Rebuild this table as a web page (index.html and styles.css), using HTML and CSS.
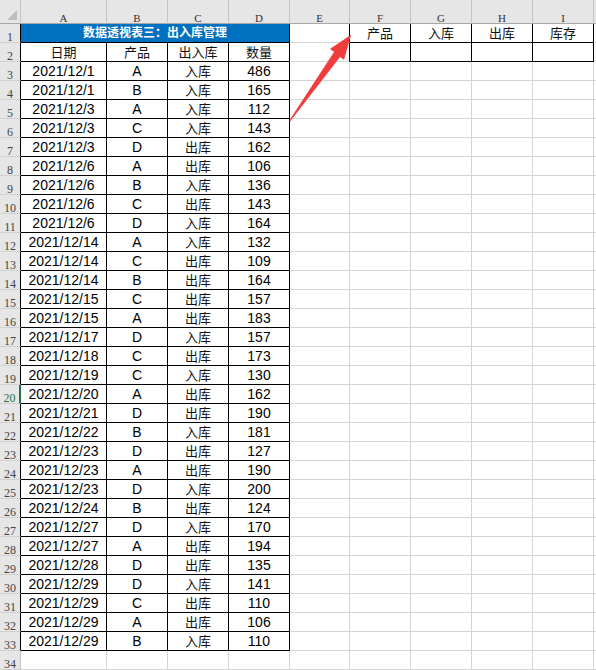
FILE: index.html
```html
<!DOCTYPE html>
<html lang="zh">
<head>
<meta charset="utf-8">
<title>数据透视表三：出入库管理</title>
<link rel="stylesheet" href="styles.css">
</head>
<body>
<div class="wrap">
<table class="sheet">
<colgroup>
<col class="w-h"><col class="w-a"><col class="w-n"><col class="w-n"><col class="w-n"><col class="w-e"><col class="w-n"><col class="w-n"><col class="w-n"><col class="w-n"><col class="w-j">
</colgroup>
<tr class="head"><th class="corner"><span class="tri"></span></th><th>A</th><th>B</th><th>C</th><th>D</th><th>E</th><th>F</th><th>G</th><th>H</th><th>I</th><th></th></tr>
<tr class="r1"><th>1</th><td class="title" colspan="4">数据透视表三：出入库管理</td><td class="edge"></td><td class="bx zh">产品</td><td class="bx zh">入库</td><td class="bx zh">出库</td><td class="bx zh">库存</td><td></td></tr>
<tr class="d r2"><th>2</th><td>日期</td><td>产品</td><td>出入库</td><td>数量</td><td class="edge"></td><td class="bx"></td><td class="bx"></td><td class="bx"></td><td class="bx"></td><td></td></tr>
<tr class="d"><th>3</th><td>2021/12/1</td><td>A</td><td>入库</td><td>486</td><td></td><td></td><td></td><td></td><td></td><td></td></tr>
<tr class="d"><th>4</th><td>2021/12/1</td><td>B</td><td>入库</td><td>165</td><td></td><td></td><td></td><td></td><td></td><td></td></tr>
<tr class="d"><th>5</th><td>2021/12/3</td><td>A</td><td>入库</td><td>112</td><td></td><td></td><td></td><td></td><td></td><td></td></tr>
<tr class="d"><th>6</th><td>2021/12/3</td><td>C</td><td>入库</td><td>143</td><td></td><td></td><td></td><td></td><td></td><td></td></tr>
<tr class="d"><th>7</th><td>2021/12/3</td><td>D</td><td>出库</td><td>162</td><td></td><td></td><td></td><td></td><td></td><td></td></tr>
<tr class="d"><th>8</th><td>2021/12/6</td><td>A</td><td>出库</td><td>106</td><td></td><td></td><td></td><td></td><td></td><td></td></tr>
<tr class="d"><th>9</th><td>2021/12/6</td><td>B</td><td>入库</td><td>136</td><td></td><td></td><td></td><td></td><td></td><td></td></tr>
<tr class="d"><th>10</th><td>2021/12/6</td><td>C</td><td>出库</td><td>143</td><td></td><td></td><td></td><td></td><td></td><td></td></tr>
<tr class="d"><th>11</th><td>2021/12/6</td><td>D</td><td>入库</td><td>164</td><td></td><td></td><td></td><td></td><td></td><td></td></tr>
<tr class="d"><th>12</th><td>2021/12/14</td><td>A</td><td>入库</td><td>132</td><td></td><td></td><td></td><td></td><td></td><td></td></tr>
<tr class="d"><th>13</th><td>2021/12/14</td><td>C</td><td>出库</td><td>109</td><td></td><td></td><td></td><td></td><td></td><td></td></tr>
<tr class="d"><th>14</th><td>2021/12/14</td><td>B</td><td>出库</td><td>164</td><td></td><td></td><td></td><td></td><td></td><td></td></tr>
<tr class="d"><th>15</th><td>2021/12/15</td><td>C</td><td>出库</td><td>157</td><td></td><td></td><td></td><td></td><td></td><td></td></tr>
<tr class="d"><th>16</th><td>2021/12/15</td><td>A</td><td>出库</td><td>183</td><td></td><td></td><td></td><td></td><td></td><td></td></tr>
<tr class="d"><th>17</th><td>2021/12/17</td><td>D</td><td>入库</td><td>157</td><td></td><td></td><td></td><td></td><td></td><td></td></tr>
<tr class="d"><th>18</th><td>2021/12/18</td><td>C</td><td>出库</td><td>173</td><td></td><td></td><td></td><td></td><td></td><td></td></tr>
<tr class="d"><th>19</th><td>2021/12/19</td><td>C</td><td>入库</td><td>130</td><td></td><td></td><td></td><td></td><td></td><td></td></tr>
<tr class="d act"><th>20</th><td>2021/12/20</td><td>A</td><td>出库</td><td>162</td><td></td><td></td><td></td><td></td><td></td><td></td></tr>
<tr class="d"><th>21</th><td>2021/12/21</td><td>D</td><td>出库</td><td>190</td><td></td><td></td><td></td><td></td><td></td><td></td></tr>
<tr class="d"><th>22</th><td>2021/12/22</td><td>B</td><td>入库</td><td>181</td><td></td><td></td><td></td><td></td><td></td><td></td></tr>
<tr class="d"><th>23</th><td>2021/12/23</td><td>D</td><td>出库</td><td>127</td><td></td><td></td><td></td><td></td><td></td><td></td></tr>
<tr class="d"><th>24</th><td>2021/12/23</td><td>A</td><td>出库</td><td>190</td><td></td><td></td><td></td><td></td><td></td><td></td></tr>
<tr class="d"><th>25</th><td>2021/12/23</td><td>D</td><td>入库</td><td>200</td><td></td><td></td><td></td><td></td><td></td><td></td></tr>
<tr class="d"><th>26</th><td>2021/12/24</td><td>B</td><td>出库</td><td>124</td><td></td><td></td><td></td><td></td><td></td><td></td></tr>
<tr class="d"><th>27</th><td>2021/12/27</td><td>D</td><td>入库</td><td>170</td><td></td><td></td><td></td><td></td><td></td><td></td></tr>
<tr class="d"><th>28</th><td>2021/12/27</td><td>A</td><td>出库</td><td>194</td><td></td><td></td><td></td><td></td><td></td><td></td></tr>
<tr class="d"><th>29</th><td>2021/12/28</td><td>D</td><td>出库</td><td>135</td><td></td><td></td><td></td><td></td><td></td><td></td></tr>
<tr class="d"><th>30</th><td>2021/12/29</td><td>D</td><td>入库</td><td>141</td><td></td><td></td><td></td><td></td><td></td><td></td></tr>
<tr class="d"><th>31</th><td>2021/12/29</td><td>C</td><td>出库</td><td>110</td><td></td><td></td><td></td><td></td><td></td><td></td></tr>
<tr class="d"><th>32</th><td>2021/12/29</td><td>A</td><td>出库</td><td>106</td><td></td><td></td><td></td><td></td><td></td><td></td></tr>
<tr class="d"><th>33</th><td>2021/12/29</td><td>B</td><td>入库</td><td>110</td><td></td><td></td><td></td><td></td><td></td><td></td></tr>
<tr><th>34</th><td></td><td></td><td></td><td></td><td></td><td></td><td></td><td></td><td></td><td></td></tr>
</table>
<svg class="arrow" width="596" height="670" viewBox="0 0 596 670" aria-hidden="true">
<polygon points="290,121 340,56.5 343.8,59.2 350.5,35.5 330.5,49 334.6,51.8 290,120" fill="#f03c3c" stroke="#f03c3c" stroke-width="0.8" stroke-linejoin="round"/>
</svg>
</div>
</body>
</html>
```
FILE: styles.css
```css
html, body {
  margin: 0;
  padding: 0;
  background: #ffffff;
  overflow: hidden;
}
.wrap {
  position: relative;
  width: 596px;
  height: 670px;
  overflow: hidden;
}
.sheet {
  table-layout: fixed;
  border-collapse: separate;
  border-spacing: 0;
  width: 640px;
  font-family: "Liberation Sans", "Noto Sans CJK SC", sans-serif;
  font-size: 14px;
  color: #000;
}
.w-h { width: 21px; }
.w-a { width: 86px; }
.w-n { width: 61px; }
.w-e { width: 60px; }
.w-j { width: 62px; }

.sheet td, .sheet th {
  box-sizing: border-box;
  padding: 0;
  height: 19px;
  line-height: 16px;
  text-align: center;
  white-space: nowrap;
  overflow: hidden;
  border-right: 1px solid #d4d4d4;
  border-bottom: 1px solid #d4d4d4;
  font-weight: normal;
  vertical-align: middle;
}
.sheet tr { height: 19px; }
.sheet .head { height: 24px; }
.sheet .head th {
  height: 24px;
  line-height: 10px;
  padding: 0;
  background: #e6e6e6;
  border-right: 1px solid #c4c4c4;
  border-bottom: 1px solid #a6a6a6;
  font-family: "Liberation Serif", "DejaVu Serif", serif;
  font-size: 11px;
  color: #333;
  vertical-align: bottom;
}
.sheet .head th.corner {
  position: relative;
  padding: 0;
}
.tri {
  position: absolute;
  right: 3px;
  bottom: 3px;
  width: 0;
  height: 0;
  border-left: 10px solid transparent;
  border-bottom: 10px solid #bdbdbd;
}
.sheet tr > th {
  background: #e6e6e6;
  border-right: 1px solid #c4c4c4;
  border-bottom: 1px solid #d0d0d0;
  font-family: "Liberation Serif", "DejaVu Serif", serif;
  font-size: 12px;
  color: #444;
  line-height: 10px;
  vertical-align: bottom;
}
.sheet .r1 > th,
.sheet .d > th {
  border-right-color: #000;
}
.sheet .title {
  background: #0070c0;
  color: #fff;
  font-weight: bold;
  font-size: 12px;
  line-height: 17px;
  border-right: 1px solid #000;
  border-bottom: 1px solid #000;
}
.sheet .d > td:nth-child(-n+5) {
  border-right: 1px solid #000;
  border-bottom: 1px solid #000;
}
.sheet .d > td:nth-child(4),
.sheet .r2 > td,
.sheet td.zh {
  font-size: 13px;
  line-height: 16px;
  padding-top: 1px;
  color: #111;
}
.sheet td.bx {
  border-right: 1px solid #000;
  border-bottom: 1px solid #000;
}
.sheet td.edge {
  border-right: 1px solid #000;
}
.sheet .act > th {
  color: #217346;
  border-right: 2px solid #217346;
}
.arrow {
  position: absolute;
  left: 0;
  top: 0;
  pointer-events: none;
}
```
